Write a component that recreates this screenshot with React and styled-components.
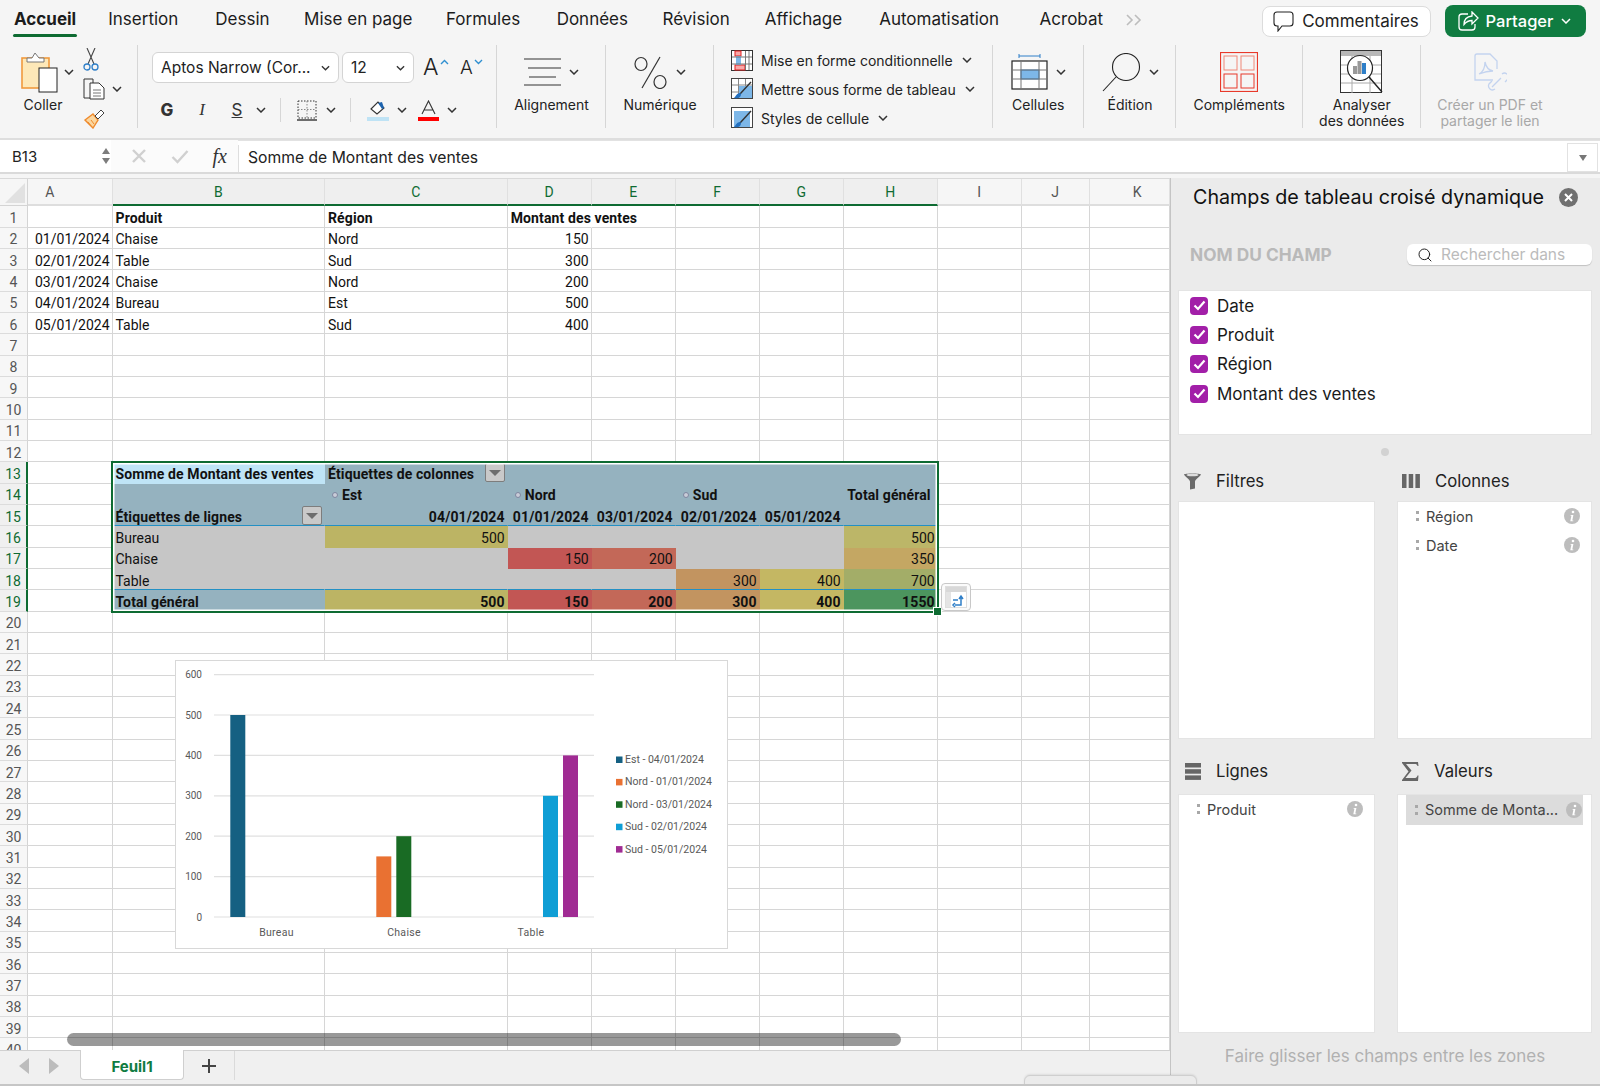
import React from "react";
import styled, { createGlobalStyle } from "styled-components";
import { Search } from "lucide-react";

const GlobalStyle = createGlobalStyle`
  html, body { margin: 0; padding: 0; background: #f5f5f5; }
  * { box-sizing: border-box; }
`;

const UI_FONT = `"Inter", "Liberation Sans", sans-serif`;
const CELL_FONT = `"Roboto", "Liberation Sans", sans-serif`;
const GREEN = "#0e6b32";

const Page = styled.div`
  position: relative;
  width: 1600px;
  height: 1086px;
  overflow: hidden;
  display: flex;
  flex-direction: column;
  background: #f5f5f5;
  font-family: ${UI_FONT};
  color: #222;
`;

/* top tabs */
const TabRow = styled.div`
  height: 40px;
  display: flex;
  align-items: center;
  padding: 0 14.5px 0 14px;
  flex: none;
`;
const TabItem = styled.div`
  position: relative;
  font-size: 17px;
  font-weight: ${(p) => (p.$active ? 700 : 400)};
  margin-right: ${(p) => p.$gap || 34.5}px;
  color: #1c1c1c;
  line-height: 38px;
  height: 40px;
  &::after {
    content: "";
    display: ${(p) => (p.$active ? "block" : "none")};
    position: absolute;
    left: -1px;
    right: -1px;
    top: 34px;
    height: 3px;
    border-radius: 2px;
    background: ${GREEN};
  }
`;
const MoreTabs = styled.svg`
  margin-left: -12px;
`;
const RightButtons = styled.div`
  margin-left: auto;
  margin-top: 2px;
  display: flex;
  align-items: center;
  gap: 14px;
`;
const CommentButton = styled.div`
  height: 31px;
  width: 169px;
  display: flex;
  align-items: center;
  justify-content: center;
  gap: 8px;
  background: #fff;
  border: 1px solid #dcdcdc;
  border-radius: 8px;
  font-size: 17px;
`;
const ShareButton = styled.div`
  height: 32px;
  width: 141px;
  display: flex;
  align-items: center;
  justify-content: center;
  gap: 7px;
  background: #107c41;
  border-radius: 8px;
  color: #fff;
  font-size: 16.5px;
  font-weight: 500;
`;

/* ribbon */
const Ribbon = styled.div`
  height: 100px;
  flex: none;
  display: flex;
  border-bottom: 2px solid #dedede;
`;
const Group = styled.div`
  position: relative;
  width: ${(p) => p.$w}px;
  flex: none;
  display: flex;
  flex-direction: ${(p) => p.$dir || "column"};
  align-items: ${(p) => p.$items || "center"};
  padding-top: ${(p) => p.$pt ?? 9}px;
  padding-left: ${(p) => p.$pl || 0}px;
  &::after {
    content: "";
    display: ${(p) => (p.$last ? "none" : "block")};
    position: absolute;
    right: 0;
    top: 5px;
    height: 83px;
    width: 1px;
    background: #d6d6d6;
  }
`;
const BigIcon = styled.div`
  height: 46px;
  display: flex;
  align-items: center;
  gap: ${(p) => p.$gap ?? 8}px;
`;
const GroupLabel = styled.div`
  font-size: 14px;
  line-height: 16px;
  text-align: center;
  color: ${(p) => (p.$off ? "#a8a8a8" : "#222")};
  margin-top: 2px;
  white-space: nowrap;
`;
const PasteCol = styled.div`
  width: 62px;
  display: flex;
  flex-direction: column;
  align-items: flex-start;
`;
const PasteTop = styled.div`
  height: 46px;
  display: flex;
  align-items: center;
  gap: 5px;
`;
const PasteLabel = styled(GroupLabel)`
  width: 44px;
`;
const ToolCol = styled.div`
  display: flex;
  flex-direction: column;
  gap: 7px;
`;
const ToolRow = styled.div`
  display: flex;
  align-items: center;
  gap: 7px;
  height: 22px;
`;
const FontRow = styled.div`
  display: flex;
  align-items: center;
  height: ${(p) => p.$h}px;
  margin-bottom: ${(p) => p.$mb || 0}px;
`;
const Select = styled.div`
  width: ${(p) => p.$w}px;
  height: 31px;
  margin-right: ${(p) => p.$mr || 0}px;
  padding: 0 8px;
  display: flex;
  align-items: center;
  justify-content: space-between;
  background: #fff;
  border: 1px solid #d4d4d4;
  border-radius: 6px;
  font-size: 15.5px;
  white-space: nowrap;
`;
const GrowLetter = styled.div`
  position: relative;
  width: ${(p) => p.$w}px;
  margin-left: ${(p) => p.$ml || 0}px;
  font-size: ${(p) => p.$size}px;
  font-weight: 300;
  line-height: 31px;
  color: #222;
  display: flex;
  align-items: center;
  gap: 1px;
  svg {
    margin-top: -12px;
  }
`;
const Tool = styled.div`
  width: ${(p) => p.$w}px;
  margin-left: ${(p) => p.$ml || 0}px;
  height: 24px;
  display: flex;
  align-items: center;
  justify-content: center;
  flex: none;
`;
const FontStyle = styled(Tool)`
  font-family: ${(p) => p.$family || UI_FONT};
  font-size: 17px;
  font-weight: ${(p) => (p.$bold ? 800 : 400)};
  font-style: ${(p) => (p.$italic ? "italic" : "normal")};
  text-decoration: ${(p) => (p.$under ? "underline" : "none")};
  color: #333;
`;
const ToolSep = styled.div`
  width: 1px;
  height: 24px;
  background: #d6d6d6;
  margin-left: ${(p) => p.$ml}px;
  flex: none;
`;
const StyleList = styled.div`
  display: flex;
  flex-direction: column;
  gap: 7px;
  padding: 0 0 0 17px;
`;
const StyleItem = styled.div`
  height: 22px;
  display: flex;
  align-items: center;
  font-size: 14px;
  white-space: nowrap;
  svg:first-child {
    margin-right: 8px;
  }
  svg:last-child {
    margin-left: 9px;
  }
`;

/* formula bar */
const FormulaBar = styled.div`
  height: 36px;
  flex: none;
  display: flex;
  align-items: flex-start;
`;
const NameBox = styled.div`
  width: 111px;
  height: 34px;
  background: #fff;
  padding: 0 1px 0 12px;
  display: flex;
  align-items: center;
  justify-content: space-between;
  font-size: 15px;
  border-bottom: 2px solid #dadada;
`;
const Spinner = styled.div`
  display: flex;
  flex-direction: column;
  gap: 4px;
`;
const Triangle = styled.div`
  width: 0;
  height: 0;
  border-left: ${(p) => p.$s || 4.5}px solid transparent;
  border-right: ${(p) => p.$s || 4.5}px solid transparent;
  border-bottom: ${(p) => (p.$down ? "none" : `6px solid ${p.$c || "#7d7d7d"}`)};
  border-top: ${(p) => (p.$down ? `6px solid ${p.$c || "#7d7d7d"}` : "none")};
`;
const FormulaActions = styled.div`
  width: 127px;
  height: 34px;
  padding: 0 11px 0 20px;
  display: flex;
  align-items: center;
  justify-content: space-between;
  background: #fbfbfb;
  border-bottom: 2px solid #dadada;
`;
const Fx = styled.span`
  font-family: "Liberation Serif", serif;
  font-style: italic;
  font-size: 20px;
  color: #333;
`;
const FormulaInput = styled.div`
  flex: 1;
  height: 34px;
  padding: 4px 0 0 0;
  background: #fff;
  border-top: 1px solid #e2e2e2;
  border-bottom: 2px solid #dadada;
  display: flex;
  align-items: stretch;
`;
const FormulaText = styled.div`
  flex: 1;
  padding-left: 9px;
  font-size: 15.7px;
  line-height: 26px;
  border-left: 1px solid #dedede;
`;
const FormulaDrop = styled.div`
  width: 31px;
  margin: -2px 2px 0 0;
  display: flex;
  align-items: center;
  justify-content: center;
  border: 1px solid #e2e2e2;
`;

/* sheet */
const Main = styled.div`
  flex: 1;
  display: flex;
  min-height: 0;
  margin-top: 2px;
`;
const SheetColumn = styled.div`
  width: 1170px;
  flex: none;
  display: flex;
  flex-direction: column;
`;
const SheetView = styled.div`
  position: relative;
  height: 872px;
  overflow: hidden;
  background: #fff;
  border-top: 1px solid #d9d9d9;
  flex: none;
`;
const Grid = styled.div`
  display: grid;
  grid-template-columns: 28px 84.5px 212.5px 182.7px 84px 84px 84px 84px 94px 84px 68px 80px;
  grid-auto-rows: 21.34px;
  grid-template-rows: 27.4px;
`;
const Corner = styled.div`
  background: #f6f6f6;
  border-right: 1px solid #d4d4d4;
  border-bottom: 1px solid #d4d4d4;
  display: flex;
  align-items: flex-end;
  justify-content: flex-end;
  padding: 0 2px 2px 0;
`;
const ColHead = styled.div`
  display: flex;
  align-items: center;
  justify-content: center;
  padding: 0 ${(p) => p.$nudgeRight || 0}px 0 ${(p) => p.$nudgeLeft || 0}px;
  font-family: ${CELL_FONT};
  font-size: 14px;
  color: ${(p) => (p.$active ? GREEN : "#555")};
  background: ${(p) => (p.$active ? "#efefef" : "#f6f6f6")};
  border-right: 1px solid #e0e0e0;
  border-bottom: ${(p) => (p.$active ? `2px solid ${GREEN}` : "2px solid #dedede")};
`;
const RowHead = styled.div`
  display: flex;
  align-items: center;
  justify-content: center;
  padding-top: 3px;
  font-family: ${CELL_FONT};
  font-size: 14px;
  color: ${(p) => (p.$active ? GREEN : "#555")};
  background: ${(p) => (p.$active ? "#f0f0f0" : "#f7f7f7")};
  border-right: ${(p) => (p.$active ? `2px solid ${GREEN}` : "1px solid #d4d4d4")};
  border-bottom: 1px solid #dcdcdc;
`;
const Cell = styled.div`
  display: flex;
  align-items: center;
  justify-content: ${(p) => p.$justify || "flex-start"};
  padding: 3px ${(p) => p.$pr ?? 2}px 0 3px;
  font-family: ${CELL_FONT};
  font-size: 14px;
  font-weight: ${(p) => (p.$bold ? 700 : 400)};
  letter-spacing: ${(p) => (p.$bold ? "0.12px" : "0")};
  color: #111;
  white-space: nowrap;
  background: ${(p) => p.$bg || "transparent"};
  border-right: 1px solid ${(p) => (p.$bg || p.$spill ? "transparent" : "#d6d6d6")};
  border-bottom: 1px solid ${(p) => (p.$line ? "#2390c4" : p.$bg ? "transparent" : "#d6d6d6")};
`;
const Expander = styled.span`
  width: 6px;
  height: 6px;
  margin: 0 4px 0 4px;
  border-radius: 50%;
  background: #c9ccd8;
  border: 1px solid #7f87a0;
  flex: none;
`;
const FilterButton = styled.div`
  width: 20px;
  height: 19px;
  margin-left: auto;
  margin-top: -2px;
  display: flex;
  align-items: center;
  justify-content: center;
  background: #c9c9c9;
  border: 1px solid #7d7d7d;
  border-radius: 2px;
  flex: none;
`;
const Selection = styled.div`
  position: absolute;
  left: 111px;
  top: 282px;
  width: 828px;
  height: 152px;
  border: 2px solid ${GREEN};
  box-shadow: inset 0 0 0 1.5px #fff;
  pointer-events: none;
`;
const Handle = styled.div`
  position: absolute;
  right: -4px;
  bottom: -4px;
  width: 7px;
  height: 7px;
  background: ${GREEN};
  outline: 1px solid #fff;
`;
const RefreshBadge = styled.div`
  position: absolute;
  left: 828px;
  top: 120px;
  width: 30px;
  height: 28px;
  display: flex;
  align-items: center;
  justify-content: center;
  background: #fbfbfb;
  border: 1px solid #c8c8c8;
  border-radius: 4px;
`;
const ChartCard = styled.div`
  position: absolute;
  left: 175px;
  top: 481px;
  width: 553px;
  height: 289px;
  background: #fff;
  border: 1px solid #d8d8d8;
`;
const ScrollThumb = styled.div`
  position: absolute;
  left: 67px;
  top: 854px;
  width: 834px;
  height: 13px;
  border-radius: 7px;
  background: rgba(0, 0, 0, 0.4);
`;
const TabBar = styled.div`
  height: 34px;
  flex: none;
  display: flex;
  align-items: flex-start;
  background: #f0f0f0;
  border-top: 1px solid #d0d0d0;
`;
const NavArrows = styled.div`
  width: 80px;
  height: 30px;
  display: flex;
  align-items: center;
  gap: 20px;
  padding-left: 19px;
`;
const SheetTab = styled.div`
  width: 104px;
  height: 30px;
  padding-top: 3px;
  display: flex;
  align-items: center;
  justify-content: center;
  background: #fff;
  border: 1px solid #cfcfcf;
  border-top: none;
  border-radius: 0 0 4px 4px;
  color: #107c41;
  font-size: 15px;
  font-weight: 700;
  margin-top: -1px;
`;
const AddSheet = styled.div`
  width: 51px;
  height: 29px;
  display: flex;
  align-items: center;
  justify-content: center;
  border-right: 1px solid #dadada;
`;

/* pivot panel */
const Panel = styled.div`
  width: 430px;
  flex: none;
  background: #ebebeb;
  border-left: 1px solid #c4c4c4;
  padding: 0 8px 0 7px;
  display: flex;
  flex-direction: column;
  height: 908px;
`;
const PanelTitle = styled.div`
  height: 38px;
  padding: 0 14px 0 15px;
  display: flex;
  align-items: center;
  justify-content: space-between;
  font-size: 19.7px;
  font-weight: 400;
  color: #111;
  white-space: nowrap;
`;
const SearchRow = styled.div`
  height: 21px;
  margin-top: 28px;
  padding-left: 12px;
  display: flex;
  align-items: center;
  justify-content: space-between;
`;
const FieldHeading = styled.div`
  font-size: 17.3px;
  font-weight: 700;
  color: #b9b9b9;
`;
const SearchBox = styled.div`
  width: 185px;
  height: 21px;
  display: flex;
  align-items: center;
  gap: 8px;
  padding-left: 10px;
  background: #fff;
  border-radius: 6px;
  box-shadow: 0 1px 1px rgba(0, 0, 0, 0.18);
  font-size: 15.5px;
  color: #bbb;
  white-space: nowrap;
`;
const FieldList = styled.div`
  height: 145px;
  margin-top: 25px;
  padding: 0 0 0 11px;
  background: #fff;
  border: 1px solid #e4e4e4;
`;
const FieldRow = styled.div`
  height: 29.3px;
  display: flex;
  align-items: center;
  gap: 9px;
  font-size: 17px;
  color: #1a1a1a;
`;
const Check = styled.span`
  width: 18px;
  height: 18px;
  display: flex;
  align-items: center;
  justify-content: center;
  border-radius: 4px;
  background: #a21fa8;
  flex: none;
`;
const Dot = styled.div`
  width: 8px;
  height: 8px;
  margin: 12.5px auto 0;
  border-radius: 50%;
  background: #d2d2d2;
`;
const Zones = styled.div`
  margin-top: 10px;
  display: grid;
  grid-template-columns: 197px 195px;
  column-gap: 22px;
  grid-template-rows: 273px 278px;
  row-gap: 16px;
`;
const Zone = styled.div`
  display: flex;
  flex-direction: column;
  min-height: 0;
`;
const ZoneHead = styled.div`
  height: ${(p) => p.$h || 35}px;
  padding: 0 0 ${(p) => (p.$h ? 6 : 5)}px ${(p) => p.$pl || 0}px;
  display: flex;
  align-items: center;
  font-size: 16.7px;
  color: #222;
  flex: none;
`;
const ZoneIcon = styled.div`
  width: ${(p) => p.$w || 33}px;
  flex: none;
  display: flex;
  align-items: center;
`;
const ZoneBody = styled.div`
  flex: 1;
  background: #fff;
  border: 1px solid #e4e4e4;
  padding: 0 ${(p) => p.$pr || 10}px 0 ${(p) => p.$pl || 0}px;
`;
const ZoneItem = styled.div`
  height: ${(p) => p.$h || 29}px;
  padding: 0 1px 0 ${(p) => p.$pad || 0}px;
  display: flex;
  align-items: center;
  font-size: 14.5px;
  color: #444;
  white-space: nowrap;
  background: ${(p) => (p.$on ? "#dcdcdc" : "transparent")};
`;
const Grip = styled.span`
  width: 3px;
  height: 10px;
  margin-right: 7px;
  flex: none;
  background: radial-gradient(circle at 1.5px 1.5px, #a8a8a8 1.6px, transparent 1.7px) 0 0 / 3px 7px;
`;
const ItemLabel = styled.span`
  flex: 1;
`;
const PanelFooter = styled.div`
  margin-top: 13px;
  text-align: center;
  font-size: 17px;
  line-height: 20px;
  color: #b1b1b1;
  white-space: nowrap;
`;
const BottomEdge = styled.div`
  position: absolute;
  left: 0;
  right: 0;
  bottom: 0;
  height: 2px;
  background: #c6c6c6;
`;
const FloatingTab = styled.div`
  position: absolute;
  left: 1024px;
  top: 1075px;
  width: 173px;
  height: 20px;
  background: #ebebeb;
  border: 1px solid #cfcfcf;
  border-radius: 6px 6px 0 0;
  box-shadow: 0 -1px 2px rgba(0, 0, 0, 0.08);
`;

const Chevron = ({ w = 10, c = "#333" }) => (
  <svg width={w} height="6" viewBox="0 0 10 6" fill="none">
    <path d="M1 1l4 4 4-4" stroke={c} strokeWidth="1.5" />
  </svg>
);

const PasteIcon = () => (
  <svg width="38" height="42" viewBox="0 0 38 42">
    <rect x="1" y="7" width="27" height="30" fill="#fde8b8" stroke="#f09a3e" strokeWidth="1.6" />
    <path d="M6 11V7h5l3-5 4 5h5v4z" fill="#fff" stroke="#777" />
    <rect x="18" y="17" width="18" height="24" fill="#fff" stroke="#222" />
  </svg>
);
const ScissorsIcon = () => (
  <svg width="16" height="24" viewBox="0 0 16 24" fill="none">
    <path d="M4 0l7 16M12 0L5 16" stroke="#444" strokeWidth="1.1" />
    <circle cx="4" cy="19" r="3" stroke="#2f7fc8" strokeWidth="1.3" />
    <circle cx="12" cy="19" r="3" stroke="#2f7fc8" strokeWidth="1.3" />
  </svg>
);
const CopyIcon = () => (
  <svg width="22" height="22" viewBox="0 0 22 22" fill="none" stroke="#333">
    <path d="M7 20H1V1h9v4" />
    <path d="M7 5h9l5 5v11H7z" fill="#fff" />
    <path d="M10 12h8M10 15h8M10 18h8" stroke="#777" />
  </svg>
);
const BrushIcon = () => (
  <svg width="22" height="21" viewBox="0 0 22 21" fill="none">
    <path d="M2 12l8-6 5 6-5 8z" fill="#fbd7a0" stroke="#ef8a2c" strokeWidth="1.4" />
    <path d="M5 14l3 4M8 12l3 4" stroke="#ef8a2c" />
    <path d="M12 8l6-6 3 3-6 6z" fill="#fff" stroke="#444" />
  </svg>
);
const BorderIcon = () => (
  <svg width="20" height="21" viewBox="0 0 20 21" fill="none">
    <rect x="1" y="1" width="18" height="17" stroke="#333" strokeDasharray="1.5 1.5" />
    <path d="M10 1v17M1 9.5h18" stroke="#888" strokeDasharray="1.5 1.5" />
    <path d="M0 20h20" stroke="#333" strokeWidth="1.4" />
  </svg>
);
const FillIcon = () => (
  <svg width="22" height="21" viewBox="0 0 22 21">
    <path d="M4 9l7-7 6 6-7 6z" fill="#fff" stroke="#333" strokeWidth="1.1" />
    <path d="M11 3l4-1 2 6-2 1z" fill="#1c63ae" />
    <rect x="0" y="17" width="22" height="4" fill="#bfe3f5" />
  </svg>
);
const TextColorIcon = () => (
  <svg width="21" height="21" viewBox="0 0 21 21" fill="none">
    <path d="M4 14L10.5 1 17 14M6.5 10h8" stroke="#333" strokeWidth="1.1" />
    <rect x="0" y="17" width="21" height="4" fill="#f00" />
  </svg>
);
const AlignIcon = () => (
  <svg width="37" height="28" viewBox="0 0 37 28" stroke="#333" strokeWidth="1.1">
    <path d="M0 1h37M4 10h33M5 19h27M0 27h37" />
  </svg>
);
const PercentIcon = () => (
  <svg width="34" height="33" viewBox="0 0 34 33" fill="none" stroke="#333" strokeWidth="1.2">
    <ellipse cx="7" cy="8" rx="6" ry="6.5" />
    <ellipse cx="26" cy="26" rx="6" ry="6.5" />
    <path d="M26 1L8 32" />
  </svg>
);
const CondFormatIcon = () => (
  <svg width="22" height="21" viewBox="0 0 22 21" fill="none">
    <rect x="0.5" y="0.5" width="21" height="20" fill="#fff" stroke="#333" />
    <rect x="4" y="1" width="6" height="5" fill="#f8a8a8" stroke="#e02020" />
    <rect x="4" y="15" width="10" height="5" fill="#f8a8a8" stroke="#e02020" />
    <rect x="5" y="6" width="5" height="9" fill="#7db7e8" />
    <path d="M14.5 1v19M18 1v19M1 7h20M1 14h20" stroke="#777" />
  </svg>
);
const TableStyleIcon = ({ full }) => (
  <svg width="22" height="22" viewBox="0 0 22 22" fill="none">
    <rect x="0.5" y="0.5" width="21" height="20" fill="#fff" stroke="#444" />
    {!full && <path d="M7.5 1v19M14.5 1v19M1 7h20M1 14h20" stroke="#888" />}
    <rect x={full ? 3 : 8} y={full ? 4 : 8} width={full ? 16 : 13} height={full ? 16 : 12} fill="#7db7e8" />
    <path d="M20 4L9 16" stroke="#333" strokeWidth="1.4" />
    <path d="M9 15c-3 0-4 3-6 5 3 1 7 0 7-4z" fill="#2270c0" />
  </svg>
);
const CellsIcon = () => (
  <svg width="37" height="36" viewBox="0 0 37 36" fill="none">
    <path d="M8 2h21M8 0v4M29 0v4" stroke="#2f7fc8" />
    <rect x="1" y="7" width="35" height="28" fill="#fff" stroke="#222" strokeWidth="1.2" />
    <rect x="10" y="16" width="18" height="9" fill="#7db7e8" stroke="#2f7fc8" />
    <path d="M10 7v28M28 7v28M1 16h35M1 25h35" stroke="#777" />
  </svg>
);
const SearchBigIcon = () => (
  <svg width="39" height="39" viewBox="0 0 39 39" fill="none" stroke="#222" strokeWidth="1.1">
    <circle cx="24" cy="14" r="13.5" />
    <path d="M14 24L1 38" />
  </svg>
);
const AddInsIcon = () => (
  <svg width="38" height="40" viewBox="0 0 38 40" fill="none" stroke="#e8392a">
    <rect x="0.5" y="0.5" width="37" height="39" strokeWidth="1.2" />
    <rect x="4" y="4" width="13" height="14" stroke="#f08878" />
    <rect x="21" y="4" width="13" height="14" stroke="#f08878" />
    <rect x="4" y="22" width="13" height="14" />
    <rect x="21" y="22" width="13" height="14" />
  </svg>
);
const AnalyseIcon = () => (
  <svg width="43" height="44" viewBox="0 0 43 44" fill="none">
    <rect x="0.5" y="0.5" width="41" height="42" fill="#fff" stroke="#333" />
    <rect x="1" y="1" width="40" height="5" fill="#b8b8b8" />
    <path d="M1 15h40M1 24h40M1 33h40M12 6v37M30 6v37" stroke="#aaa" />
    <circle cx="20" cy="18" r="12.5" fill="#fff" stroke="#222" strokeWidth="1.2" />
    <rect x="13" y="16" width="4" height="8" fill="#999" />
    <rect x="17.5" y="11" width="4" height="13" fill="#999" />
    <rect x="22" y="13" width="4" height="11" fill="#2f7fc8" />
    <path d="M29 27l13 15" stroke="#222" strokeWidth="1.4" />
  </svg>
);
const PdfIcon = () => (
  <svg width="33" height="38" viewBox="0 0 33 38" fill="none" stroke="#c3d3ef" strokeWidth="1.3">
    <path d="M19 27H1V3a2 2 0 012-2h13l7 7v8" />
    <path d="M5 21c4-2 6-6 6-12 1 5 3 8 8 9-4 0-9 1-14 3z" />
    <path d="M18 34l9-9M21 36a4 4 0 01-6-5l3-3M28 21a4 4 0 016 5l-3 3" />
  </svg>
);
const CommentIcon = () => (
  <svg width="21" height="21" viewBox="0 0 21 21" fill="none" stroke="#222" strokeWidth="1.1">
    <path d="M4 1h13a3 3 0 013 3v8a3 3 0 01-3 3H9l-4 5v-5H4a3 3 0 01-3-3V4a3 3 0 013-3z" />
  </svg>
);
const ShareIcon = () => (
  <svg width="21" height="20" viewBox="0 0 21 20" fill="none" stroke="#fff" strokeWidth="1.3">
    <path d="M10 3H4a3 3 0 00-3 3v10a3 3 0 003 3h10a3 3 0 003-3v-3" />
    <path d="M14 1l6 6-6 6V9.5c-4 0-6 1.5-8 4 0-5 3-8 8-8.5z" />
  </svg>
);
const CheckMark = () => (
  <svg width="13" height="11" viewBox="0 0 13 11" fill="none">
    <path d="M1.5 5.5l3.5 3.5 6.5-7.5" stroke="#fff" strokeWidth="2.2" />
  </svg>
);
const InfoIcon = () => (
  <svg width="16" height="16" viewBox="0 0 16 16">
    <circle cx="8" cy="8" r="8" fill="#bdbdbd" />
    <circle cx="9" cy="4" r="1.3" fill="#fff" />
    <path d="M6.7 7h2.700L8.300 12.500h1v.8H6.300l1.100-5.500h-.9z" fill="#fff" />
  </svg>
);
const CloseIcon = () => (
  <svg width="19" height="19" viewBox="0 0 19 19">
    <circle cx="9.5" cy="9.5" r="9.5" fill="#707070" />
    <path d="M6 6l7 7M13 6l-7 7" stroke="#fff" strokeWidth="2" />
  </svg>
);
const FilterIcon = () => (
  <svg width="19" height="18" viewBox="0 0 19 18">
    <path d="M1 2.5C1 1 18 1 18 2.5c0 1-6 5-6 7v7l-5 1v-8c0-2-6-6-6-7z" fill="#6a6a6a" />
    <ellipse cx="9.5" cy="3" rx="6" ry="1.3" fill="#ddd" />
  </svg>
);
const ColumnsIcon = () => (
  <svg width="18" height="14" viewBox="0 0 18 14" fill="#666">
    <rect x="0" width="4.5" height="14" />
    <rect x="6.7" width="4.5" height="14" />
    <rect x="13.4" width="4.5" height="14" />
  </svg>
);
const RowsIcon = () => (
  <svg width="16" height="17" viewBox="0 0 16 17" fill="#666">
    <rect width="16" height="4.5" />
    <rect y="6.2" width="16" height="4.5" />
    <rect y="12.4" width="16" height="4.5" />
  </svg>
);
const SigmaIcon = () => (
  <svg width="17" height="19" viewBox="0 0 17 19" fill="#666">
    <path d="M0 0h16l.5 4h-1c-.5-1.5-1-2-3-2H4l5.500 6.500L3.500 16H12c2 0 3-.5 3.500-2.500h1L16 19H0v-1l6.500-8.500L0 1z" />
  </svg>
);
const RefreshIcon = () => (
  <svg width="22" height="22" viewBox="0 0 22 22" fill="none">
    <rect x="0.5" y="0.5" width="21" height="21" fill="#fff" stroke="#dedede" />
    <rect x="1" y="1" width="20" height="5" fill="#d8d8d8" />
    <rect x="1" y="6" width="5" height="15" fill="#e4e4e4" />
    <path d="M10 19h6v-8M14 13l2-3 2 3M10 17l-2 2 2 2M8 14h5" stroke="#2f7fc8" strokeWidth="1.5" />
  </svg>
);

const CHART_COLORS = ["#156082", "#e97132", "#196b24", "#0f9ed5", "#a02b93"];
const LEGEND = ["Est - 04/01/2024", "Nord - 01/01/2024", "Nord - 03/01/2024", "Sud - 02/01/2024", "Sud - 05/01/2024"];
const BARS = [
  { x: 54.3, v: 500, c: 0 },
  { x: 200.3, v: 150, c: 1 },
  { x: 220.3, v: 200, c: 2 },
  { x: 367, v: 300, c: 3 },
  { x: 387, v: 400, c: 4 },
];

const Chart = () => {
  const zero = 256;
  const perHundred = 40.4;
  return (
    <svg width="551" height="287" viewBox="0 0 551 287">
      {[0, 100, 200, 300, 400, 500, 600].map((v) => {
        const y = zero - (v / 100) * perHundred;
        return (
          <g key={v}>
            <line x1="38" x2="418" y1={y} y2={y} stroke="#e0e0e0" strokeWidth="1.2" />
            <text x="26" y={y + 3.5} textAnchor="end" fontFamily={CELL_FONT} fontSize="10" fill="#595959">
              {v}
            </text>
          </g>
        );
      })}
      {BARS.map((b) => (
        <rect
          key={b.c}
          x={b.x}
          y={zero - (b.v / 100) * perHundred}
          width="15"
          height={(b.v / 100) * perHundred}
          fill={CHART_COLORS[b.c]}
        />
      ))}
      {[
        ["Bureau", 100.5],
        ["Chaise", 228],
        ["Table", 355],
      ].map(([label, x]) => (
        <text key={label} x={x} y="275" textAnchor="middle" fontFamily={CELL_FONT} fontSize="10.5" letterSpacing="0.3" fill="#595959">
          {label}
        </text>
      ))}
      {LEGEND.map((label, i) => {
        const y = 98.5 + i * 22.4;
        return (
          <g key={label}>
            <rect x="440" y={y - 3} width="6.5" height="6.5" fill={CHART_COLORS[i]} />
            <text x="449" y={y + 3.5} fontFamily={CELL_FONT} fontSize="10.5" fill="#595959">
              {label}
            </text>
          </g>
        );
      })}
    </svg>
  );
};

const COLS = ["A", "B", "C", "D", "E", "F", "G", "H", "I", "J", "K"];
const HEAD = "#95b2bf";
const GREY = "#c6c6c6";

const DATA = {
  B1: { t: "Produit", bold: true },
  C1: { t: "Région", bold: true },
  D1: { t: "Montant des ventes", bold: true, spill: true },
  A2: { t: "01/01/2024", right: true },
  B2: { t: "Chaise" },
  C2: { t: "Nord" },
  D2: { t: "150", right: true },
  A3: { t: "02/01/2024", right: true },
  B3: { t: "Table" },
  C3: { t: "Sud" },
  D3: { t: "300", right: true },
  A4: { t: "03/01/2024", right: true },
  B4: { t: "Chaise" },
  C4: { t: "Nord" },
  D4: { t: "200", right: true },
  A5: { t: "04/01/2024", right: true },
  B5: { t: "Bureau" },
  C5: { t: "Est" },
  D5: { t: "500", right: true },
  A6: { t: "05/01/2024", right: true },
  B6: { t: "Table" },
  C6: { t: "Sud" },
  D6: { t: "400", right: true },

  B13: { t: "Somme de Montant des ventes", bold: true, bg: "#bfe4f6" },
  C13: { t: "Étiquettes de colonnes", bold: true, filter: true },
  C14: { t: "Est", bold: true, exp: true },
  D14: { t: "Nord", bold: true, exp: true },
  F14: { t: "Sud", bold: true, exp: true },
  H14: { t: "Total général", bold: true, right: true, pr: 6 },
  B15: { t: "Étiquettes de lignes", bold: true, filter: true },
  C15: { t: "04/01/2024", bold: true, right: true },
  D15: { t: "01/01/2024", bold: true, right: true },
  E15: { t: "03/01/2024", bold: true, right: true },
  F15: { t: "02/01/2024", bold: true, right: true },
  G15: { t: "05/01/2024", bold: true, right: true },
  B16: { t: "Bureau" },
  C16: { t: "500", right: true, bg: "#bcb464" },
  H16: { t: "500", right: true, bg: "#bcb668" },
  B17: { t: "Chaise" },
  D17: { t: "150", right: true, bg: "#c25654" },
  E17: { t: "200", right: true, bg: "#c36858" },
  H17: { t: "350", right: true, bg: "#c4a763" },
  B18: { t: "Table" },
  F18: { t: "300", right: true, bg: "#c29460" },
  G18: { t: "400", right: true, bg: "#c4b763" },
  H18: { t: "700", right: true, bg: "#a3ad68" },
  B19: { t: "Total général", bold: true },
  C19: { t: "500", bold: true, right: true, bg: "#bcb464" },
  D19: { t: "150", bold: true, right: true, bg: "#c25654" },
  E19: { t: "200", bold: true, right: true, bg: "#c36858" },
  F19: { t: "300", bold: true, right: true, bg: "#c29460" },
  G19: { t: "400", bold: true, right: true, bg: "#c4b763" },
  H19: { t: "1550", bold: true, right: true, bg: "#4c955e" },
};

const inPivot = (col, row) => "BCDEFGH".includes(col) && row >= 13 && row <= 19;
const pivotBg = (row) => (row >= 16 && row <= 18 ? GREY : HEAD);

const SheetCell = ({ col, row }) => {
  const data = DATA[`${col}${row}`] || {};
  const pivot = inPivot(col, row);
  return (
    <Cell
      $bg={data.bg || (pivot ? pivotBg(row) : undefined)}
      $bold={data.bold}
      $spill={data.spill}
      $justify={data.right ? "flex-end" : "flex-start"}
      $pr={data.pr}
      $line={pivot && (row === 15 || row === 18)}
    >
      {data.exp && <Expander />}
      {data.t}
      {data.filter && (
        <FilterButton>
          <Triangle $down $s={6} $c="#6d6d6d" />
        </FilterButton>
      )}
    </Cell>
  );
};

const ZoneRow = ({ label, pad, on, h }) => (
  <ZoneItem $pad={pad} $on={on} $h={h}>
    <Grip />
    <ItemLabel>{label}</ItemLabel>
    <InfoIcon />
  </ZoneItem>
);

export default function App() {
  return (
    <Page>
      <GlobalStyle />
      <TabRow>
        <TabItem $active $gap={32}>Accueil</TabItem>
        <TabItem $gap={37}>Insertion</TabItem>
        <TabItem>Dessin</TabItem>
        <TabItem $gap={33.5}>Mise en page</TabItem>
        <TabItem $gap={36.5}>Formules</TabItem>
        <TabItem>Données</TabItem>
        <TabItem $gap={35}>Révision</TabItem>
        <TabItem $gap={37}>Affichage</TabItem>
        <TabItem $gap={40.5}>Automatisation</TabItem>
        <TabItem>Acrobat</TabItem>
        <MoreTabs width="16" height="12" viewBox="0 0 16 12" fill="none" stroke="#bdbdbd" strokeWidth="1.6">
          <path d="M1 1l5 5-5 5M9 1l5 5-5 5" />
        </MoreTabs>
        <RightButtons>
          <CommentButton>
            <CommentIcon />
            Commentaires
          </CommentButton>
          <ShareButton>
            <ShareIcon />
            Partager
            <Chevron w={12} c="#fff" />
          </ShareButton>
        </RightButtons>
      </TabRow>

      <Ribbon>
        <Group $w={138} $dir="row" $items="flex-start" $pl={21} $pt={9}>
          <PasteCol>
            <PasteTop>
              <PasteIcon />
              <Chevron />
            </PasteTop>
            <PasteLabel>Coller</PasteLabel>
          </PasteCol>
          <ToolCol>
            <ToolRow>
              <ScissorsIcon />
            </ToolRow>
            <ToolRow>
              <CopyIcon />
              <Chevron />
            </ToolRow>
            <ToolRow>
              <BrushIcon />
            </ToolRow>
          </ToolCol>
        </Group>

        <Group $w={359} $items="flex-start" $pl={14} $pt={12}>
          <FontRow $h={31} $mb={15}>
            <Select $w={187} $mr={3}>
              Aptos Narrow (Cor...
              <Chevron w={9} />
            </Select>
            <Select $w={72}>
              12
              <Chevron w={9} />
            </Select>
            <GrowLetter $w={34} $ml={9} $size={23}>
              A
              <svg width="9" height="6" viewBox="0 0 9 6" fill="none" stroke="#2f8fd0" strokeWidth="1.4">
                <path d="M1 5l3.5-3.5L8 5" />
              </svg>
            </GrowLetter>
            <GrowLetter $w={30} $ml={3} $size={19}>
              A
              <svg width="9" height="6" viewBox="0 0 9 6" fill="none" stroke="#2f8fd0" strokeWidth="1.4">
                <path d="M1 1l3.5 3.5L8 1" />
              </svg>
            </GrowLetter>
          </FontRow>
          <FontRow $h={24}>
            <FontStyle $w={30} $bold>G</FontStyle>
            <FontStyle $w={30} $ml={5} $italic $family={'"Liberation Serif", serif'}>I</FontStyle>
            <FontStyle $w={30} $ml={5} $under>S</FontStyle>
            <Tool $w={14} $ml={2}><Chevron /></Tool>
            <ToolSep $ml={12} />
            <Tool $w={20} $ml={16}><BorderIcon /></Tool>
            <Tool $w={14} $ml={7}><Chevron /></Tool>
            <ToolSep $ml={12} />
            <Tool $w={22} $ml={16}><FillIcon /></Tool>
            <Tool $w={14} $ml={6}><Chevron /></Tool>
            <Tool $w={21} $ml={9}><TextColorIcon /></Tool>
            <Tool $w={14} $ml={6}><Chevron /></Tool>
          </FontRow>
        </Group>

        <Group $w={109}>
          <BigIcon>
            <AlignIcon />
            <Chevron />
          </BigIcon>
          <GroupLabel>Alignement</GroupLabel>
        </Group>
        <Group $w={108}>
          <BigIcon>
            <PercentIcon />
            <Chevron />
          </BigIcon>
          <GroupLabel>Numérique</GroupLabel>
        </Group>

        <Group $w={278.5} $items="flex-start" $pt={9}>
          <StyleList>
            <StyleItem>
              <CondFormatIcon />
              Mise en forme conditionnelle
              <Chevron />
            </StyleItem>
            <StyleItem>
              <TableStyleIcon />
              Mettre sous forme de tableau
              <Chevron />
            </StyleItem>
            <StyleItem>
              <TableStyleIcon full />
              Styles de cellule
              <Chevron />
            </StyleItem>
          </StyleList>
        </Group>

        <Group $w={91.5}>
          <BigIcon>
            <CellsIcon />
            <Chevron />
          </BigIcon>
          <GroupLabel>Cellules</GroupLabel>
        </Group>
        <Group $w={92}>
          <BigIcon>
            <SearchBigIcon />
            <Chevron />
          </BigIcon>
          <GroupLabel>Édition</GroupLabel>
        </Group>
        <Group $w={126.5}>
          <BigIcon>
            <AddInsIcon />
          </BigIcon>
          <GroupLabel>Compléments</GroupLabel>
        </Group>
        <Group $w={118.5}>
          <BigIcon>
            <AnalyseIcon />
          </BigIcon>
          <GroupLabel>
            Analyser
            <br />
            des données
          </GroupLabel>
        </Group>
        <Group $w={138} $last>
          <BigIcon>
            <PdfIcon />
          </BigIcon>
          <GroupLabel $off>
            Créer un PDF et
            <br />
            partager le lien
          </GroupLabel>
        </Group>
      </Ribbon>

      <FormulaBar>
        <NameBox>
          B13
          <Spinner>
            <Triangle />
            <Triangle $down />
          </Spinner>
        </NameBox>
        <FormulaActions>
          <svg width="16" height="16" viewBox="0 0 16 16" stroke="#d0d0d0" strokeWidth="2.4">
            <path d="M2 2l12 12M14 2L2 14" />
          </svg>
          <svg width="18" height="15" viewBox="0 0 18 15" fill="none" stroke="#d0d0d0" strokeWidth="2.4">
            <path d="M1.5 8l5 5 10-11" />
          </svg>
          <Fx>fx</Fx>
        </FormulaActions>
        <FormulaInput>
          <FormulaText>Somme de Montant des ventes</FormulaText>
          <FormulaDrop>
            <Triangle $down $c="#777" />
          </FormulaDrop>
        </FormulaInput>
      </FormulaBar>

      <Main>
        <SheetColumn>
          <SheetView>
            <Grid>
              <Corner>
                <svg width="20" height="20" viewBox="0 0 20 20">
                  <path d="M20 0v20H0z" fill="#e1e1e1" />
                </svg>
              </Corner>
              {COLS.map((c) => (
                <ColHead
                  key={c}
                  $active={"BCDEFGH".includes(c)}
                  $nudgeRight={c === "A" ? 40 : 0}
                  $nudgeLeft={c === "K" ? 16 : 0}
                >
                  {c}
                </ColHead>
              ))}
              {Array.from({ length: 40 }, (_, i) => i + 1).map((row) => (
                <React.Fragment key={row}>
                  <RowHead $active={row >= 13 && row <= 19}>{row}</RowHead>
                  {COLS.map((c) => (
                    <SheetCell key={c} col={c} row={row} />
                  ))}
                </React.Fragment>
              ))}
            </Grid>
            <Selection>
              <Handle />
              <RefreshBadge>
                <RefreshIcon />
              </RefreshBadge>
            </Selection>
            <ChartCard>
              <Chart />
            </ChartCard>
            <ScrollThumb />
          </SheetView>
          <TabBar>
            <NavArrows>
              <svg width="10" height="16" viewBox="0 0 10 16"><path d="M10 0v16L0 8z" fill="#bcbcbc" /></svg>
              <svg width="10" height="16" viewBox="0 0 10 16"><path d="M0 0v16l10-8z" fill="#bcbcbc" /></svg>
            </NavArrows>
            <SheetTab>Feuil1</SheetTab>
            <AddSheet>
              <svg width="14" height="14" viewBox="0 0 14 14" stroke="#444" strokeWidth="2">
                <path d="M7 0v14M0 7h14" />
              </svg>
            </AddSheet>
          </TabBar>
        </SheetColumn>

        <Panel>
          <PanelTitle>
            Champs de tableau croisé dynamique
            <CloseIcon />
          </PanelTitle>
          <SearchRow>
            <FieldHeading>NOM DU CHAMP</FieldHeading>
            <SearchBox>
              <Search size={16} color="#222" strokeWidth={1.5} />
              Rechercher dans
            </SearchBox>
          </SearchRow>
          <FieldList>
            {["Date", "Produit", "Région", "Montant des ventes"].map((f) => (
              <FieldRow key={f}>
                <Check>
                  <CheckMark />
                </Check>
                {f}
              </FieldRow>
            ))}
          </FieldList>
          <Dot />
          <Zones>
            <Zone>
              <ZoneHead $pl={5}>
                <ZoneIcon><FilterIcon /></ZoneIcon>
                Filtres
              </ZoneHead>
              <ZoneBody />
            </Zone>
            <Zone>
              <ZoneHead $pl={5}>
                <ZoneIcon><ColumnsIcon /></ZoneIcon>
                Colonnes
              </ZoneHead>
              <ZoneBody $pl={18}>
                <ZoneRow label="Région" />
                <ZoneRow label="Date" />
              </ZoneBody>
            </Zone>
            <Zone>
              <ZoneHead $pl={7} $h={39}>
                <ZoneIcon $w={31}><RowsIcon /></ZoneIcon>
                Lignes
              </ZoneHead>
              <ZoneBody $pl={18} $pr={10}>
                <ZoneRow label="Produit" />
              </ZoneBody>
            </Zone>
            <Zone>
              <ZoneHead $pl={5} $h={39}>
                <ZoneIcon $w={32}><SigmaIcon /></ZoneIcon>
                Valeurs
              </ZoneHead>
              <ZoneBody $pl={8} $pr={8}>
                <ZoneRow label="Somme de Monta..." pad={9} on h={30} />
              </ZoneBody>
            </Zone>
          </Zones>
          <PanelFooter>Faire glisser les champs entre les zones</PanelFooter>
        </Panel>
      </Main>
      <FloatingTab />
      <BottomEdge />
    </Page>
  );
}
